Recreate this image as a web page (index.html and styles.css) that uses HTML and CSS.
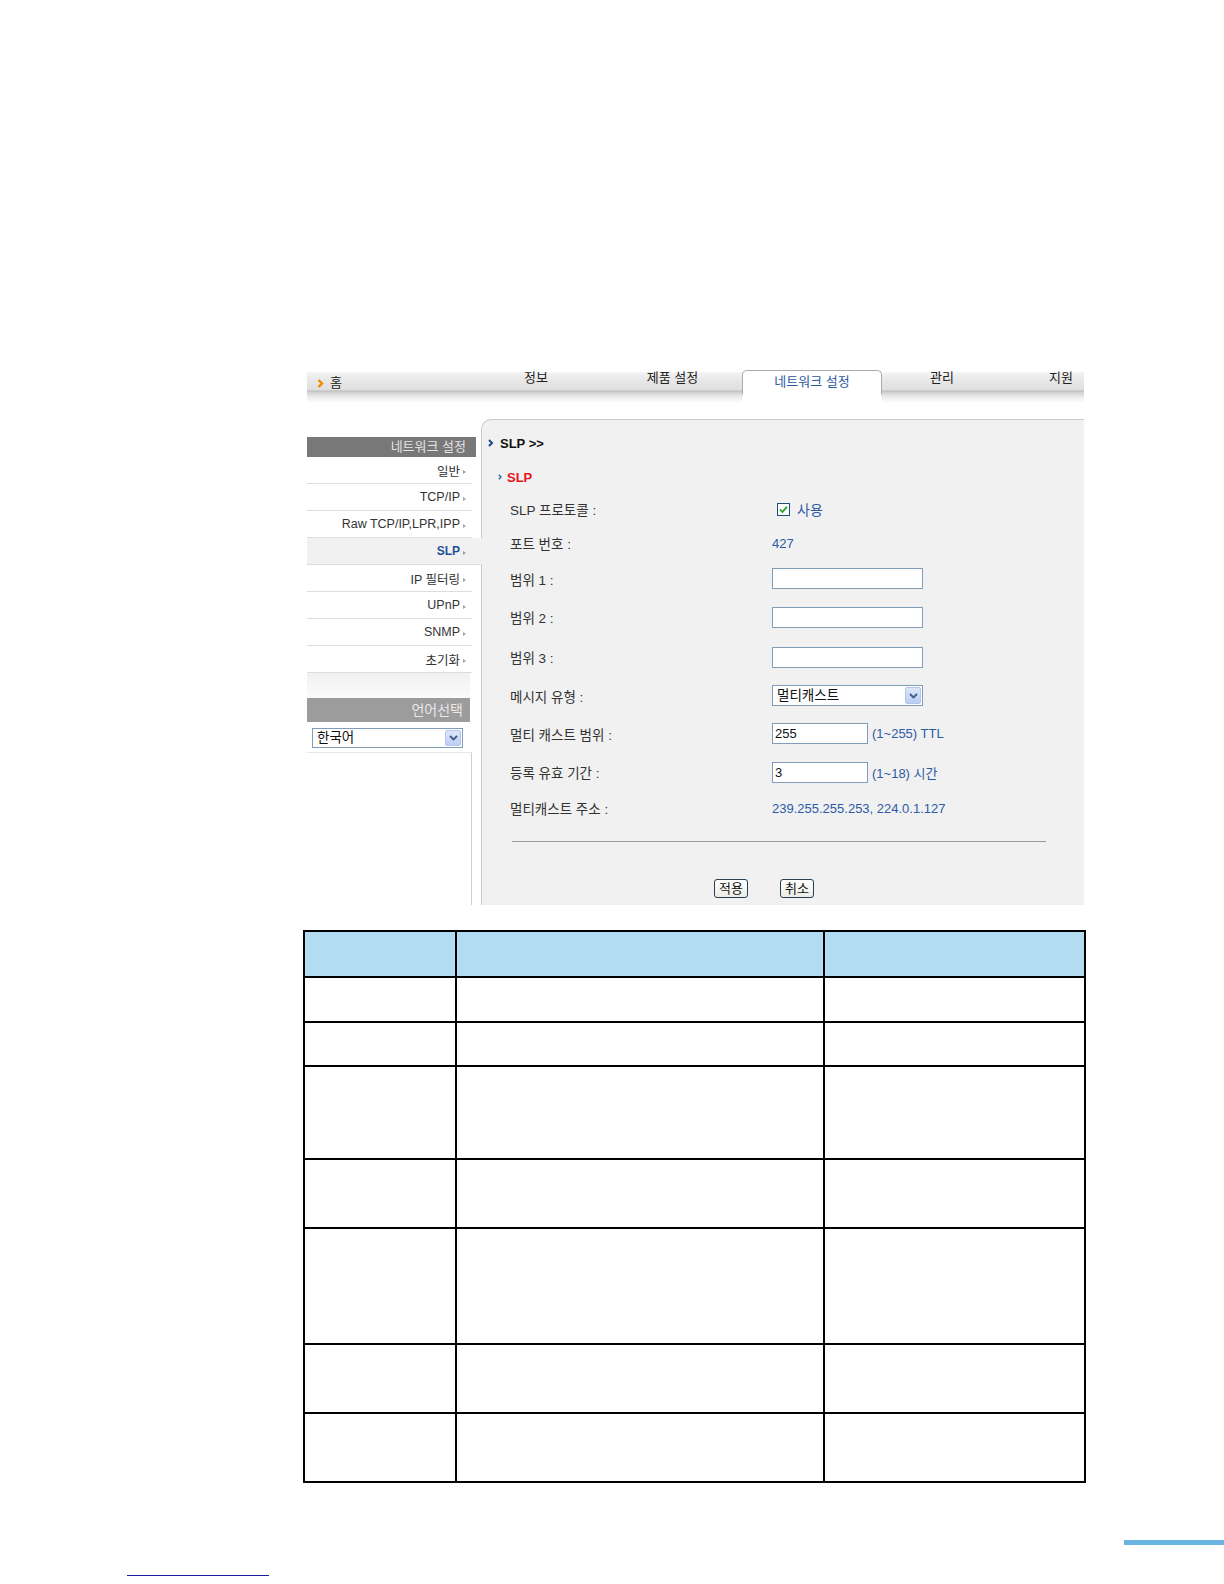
FILE: index.html
```html
<!DOCTYPE html>
<html lang="ko">
<head>
<meta charset="utf-8">
<title>SLP</title>
<link rel="stylesheet" href="styles.css">
</head>
<body>
<div class="page">
  <nav class="nav">
    <div class="nav-item nav-home">
      <svg class="home-arrow" width="7" height="9" viewBox="0 0 7 9"><polyline points="1.5,1 5,4.5 1.5,8" fill="none" stroke="#f08a00" stroke-width="2.4"/></svg>
      <span>홈</span>
    </div>
    <div class="nav-item nav-w1">정보</div>
    <div class="nav-item nav-w2">제품 설정</div>
    <div class="nav-item nav-tab">네트워크 설정</div>
    <div class="nav-item nav-w3">관리</div>
    <div class="nav-item nav-w4">지원</div>
  </nav>

  <div class="main">
    <aside class="side">
      <div class="side-head">네트워크 설정</div>
      <ul class="side-menu">
        <li class="side-item">일반<span class="tri"></span></li>
        <li class="side-item">TCP/IP<span class="tri"></span></li>
        <li class="side-item">Raw TCP/IP,LPR,IPP<span class="tri"></span></li>
        <li class="side-item active">SLP<span class="tri"></span></li>
        <li class="side-item">IP 필터링<span class="tri"></span></li>
        <li class="side-item">UPnP<span class="tri"></span></li>
        <li class="side-item">SNMP<span class="tri"></span></li>
        <li class="side-item">초기화<span class="tri"></span></li>
      </ul>
      <div class="side-spacer"></div>
      <div class="side-head side-head-lang">언어선택</div>
      <div class="lang-wrap">
        <div class="select select-lang">
          <span class="select-text">한국어</span>
          <span class="select-btn"><svg width="9" height="6" viewBox="0 0 9 6"><polyline points="1,1 4.5,4.5 8,1" fill="none" stroke="#3d5a8c" stroke-width="1.8"/></svg></span>
        </div>
      </div>
      <div class="side-fill"></div>
    </aside>

    <section class="panel">
      <div class="panel-title">
        <svg width="6" height="8" viewBox="0 0 6 8"><polyline points="1,1 4,4 1,7" fill="none" stroke="#1c4a8a" stroke-width="2"/></svg>
        <span>SLP &gt;&gt;</span>
      </div>
      <div class="panel-sub">
        <svg width="4" height="6" viewBox="0 0 4 6"><polyline points="0.8,0.8 3,3 0.8,5.2" fill="none" stroke="#3a62a0" stroke-width="1.4"/></svg>
        <span>SLP</span>
      </div>

      <div class="form">
        <div class="row h34">
          <div class="label">SLP 프로토콜 :</div>
          <div class="value check-val">
            <span class="checkbox"><svg width="13" height="13" viewBox="0 0 13 13"><rect x="0.5" y="0.5" width="12" height="12" fill="#fbfbfb" stroke="#1f4e7a"/><polyline points="3,6.5 5.4,9 10,3.8" fill="none" stroke="#22a322" stroke-width="1.8"/></svg></span>
            <span class="blue ko">사용</span>
          </div>
        </div>
        <div class="row h34">
          <div class="label">포트 번호 :</div>
          <div class="value blue">427</div>
        </div>
        <div class="row h37">
          <div class="label">범위 1 :</div>
          <div class="value"><input class="text-in wide" type="text" value=""></div>
        </div>
        <div class="row h40">
          <div class="label">범위 2 :</div>
          <div class="value"><input class="text-in wide" type="text" value=""></div>
        </div>
        <div class="row h40">
          <div class="label">범위 3 :</div>
          <div class="value"><input class="text-in wide" type="text" value=""></div>
        </div>
        <div class="row h37">
          <div class="label">메시지 유형 :</div>
          <div class="value">
            <div class="select select-msg">
              <span class="select-text">멀티캐스트</span>
              <span class="select-btn"><svg width="9" height="6" viewBox="0 0 9 6"><polyline points="1,1 4.5,4.5 8,1" fill="none" stroke="#3d5a8c" stroke-width="1.8"/></svg></span>
            </div>
          </div>
        </div>
        <div class="row h39">
          <div class="label">멀티 캐스트 범위 :</div>
          <div class="value inline-val"><input class="text-in narrow" type="text" value="255"><span class="blue">(1~255) TTL</span></div>
        </div>
        <div class="row h38">
          <div class="label">등록 유효 기간 :</div>
          <div class="value inline-val"><input class="text-in narrow" type="text" value="3"><span class="blue">(1~18) 시간</span></div>
        </div>
        <div class="row h34">
          <div class="label">멀티캐스트 주소 :</div>
          <div class="value blue">239.255.255.253, 224.0.1.127</div>
        </div>
      </div>

      <div class="hr"></div>

      <div class="buttons">
        <button class="btn" type="button">적용</button>
        <button class="btn" type="button">취소</button>
      </div>
    </section>
  </div>

  <table class="spec">
    <colgroup>
      <col class="c1">
      <col class="c2">
      <col class="c3">
    </colgroup>
    <tr class="r-head"><th></th><th></th><th></th></tr>
    <tr class="r45"><td></td><td></td><td></td></tr>
    <tr class="r44"><td></td><td></td><td></td></tr>
    <tr class="r93"><td></td><td></td><td></td></tr>
    <tr class="r69"><td></td><td></td><td></td></tr>
    <tr class="r116"><td></td><td></td><td></td></tr>
    <tr class="r69"><td></td><td></td><td></td></tr>
    <tr class="r69"><td></td><td></td><td></td></tr>
  </table>

  <div class="foot-bar"></div>
  <div class="foot-line"></div>
</div>
</body>
</html>
```

FILE: styles.css
```css
* { box-sizing: border-box; }

html, body {
  margin: 0;
  padding: 0;
  background: #ffffff;
}

body {
  width: 1224px;
  font-family: "Liberation Sans", Arial, "Noto Sans CJK KR", sans-serif;
  color: #222222;
}

.page {
  padding-top: 370px;
}

/* ---------- top navigation ---------- */
.nav {
  margin-left: 307px;
  width: 777px;
  height: 33px;
  display: flex;
  font-size: 13px;
  line-height: 14px;
  color: #222222;
  background: linear-gradient(to bottom,
    #ffffff 0, #ffffff 2px,
    #f5f5f5 2px, #e9e9e9 9px, #dfdfdf 20px,
    #bcbcbc 21px, #cfcfcf 22px,
    #ececec 27px, #ffffff 33px);
}

.nav-item {
  padding-top: 1px;
  text-align: center;
  white-space: nowrap;
}

.nav-home {
  width: 162px;
  display: flex;
  align-items: flex-start;
  gap: 6px;
  padding-left: 10px;
  padding-top: 6px;
  text-align: left;
}

.home-arrow {
  margin-top: 3px;
}

.nav-w1 { width: 134px; }
.nav-w2 { width: 139px; }

.nav-tab {
  position: relative;
  width: 140px;
  padding-top: 4px;
  color: #2a5ba0;
  background: #ffffff;
  border: 1px solid #ababab;
  border-bottom: 0;
  border-radius: 5px 5px 0 0;
}

.nav-tab::after {
  content: "";
  position: absolute;
  left: -1px;
  right: -1px;
  bottom: 0;
  height: 9px;
  background: linear-gradient(to bottom, rgba(255,255,255,0.6), #ffffff 4px);
}

.nav-w3 { width: 120px; }

.nav-w4 {
  width: 82px;
  text-align: right;
  padding-right: 11px;
}

/* ---------- main area ---------- */
.main {
  display: flex;
  margin-top: 16px;
  margin-left: 307px;
}

.side {
  width: 174px;
  padding-top: 18px;
  display: flex;
  flex-direction: column;
}

.side-head {
  height: 20px;
  margin-right: 5px;
  padding-right: 10px;
  background: #787878;
  color: #e4e4e4;
  text-align: right;
  font-size: 13px;
  line-height: 20px;
}

.side-menu {
  list-style: none;
  margin: 0;
  padding: 0;
}

.side-item {
  height: 27px;
  margin-right: 9px;
  padding-right: 6px;
  border-bottom: 1px solid #dddddd;
  display: flex;
  justify-content: flex-end;
  align-items: center;
  gap: 3px;
  font-size: 12.5px;
  color: #333333;
}

.side-item.active {
  position: relative;
  z-index: 1;
  margin-right: -1px;
  padding-right: 16px;
  background: #f1f1f1;
  color: #1f4f9a;
  font-weight: bold;
  font-size: 12px;
}

.tri {
  width: 0;
  height: 0;
  margin-top: 3px;
  border-left: 3px solid #a0a0a0;
  border-top: 2.5px solid transparent;
  border-bottom: 2.5px solid transparent;
}

.side-spacer {
  height: 25px;
  margin-right: 11px;
  background: linear-gradient(to bottom, #f1f1f1, #fbfbfb);
}

.side-head-lang {
  height: 24px;
  line-height: 24px;
  margin-right: 11px;
  padding-right: 7px;
  background: #9c9c9c;
  color: #e8e8e8;
  font-size: 14px;
}

.lang-wrap {
  padding: 6px 0 0 5px;
}

.side-fill {
  flex: 1;
  margin-top: 4px;
  margin-right: 9px;
  border-top: 1px solid #e8e8e8;
  border-right: 1px solid #cfcfcf;
}

/* ---------- select look-alike ---------- */
.select {
  width: 151px;
  display: flex;
  align-items: center;
  justify-content: space-between;
  background: #ffffff;
  border: 1px solid #7f9db9;
  padding: 1px 1px 1px 4px;
  font-size: 13.5px;
  color: #111111;
}

.select-lang { height: 20px; }
.select-msg { height: 21px; }

.select-text {
  line-height: 16px;
}

.select-btn {
  width: 16px;
  height: 100%;
  display: flex;
  align-items: center;
  justify-content: center;
  background: linear-gradient(to bottom, #dde7fb, #bccdf3);
  border: 1px solid #b4c6ee;
  border-radius: 2px;
}

/* ---------- panel ---------- */
.panel {
  width: 603px;
  padding-bottom: 7px;
  background: #f1f1f1;
  border-left: 1px solid #c9c9c9;
  border-top: 1px solid #c9c9c9;
  border-top-left-radius: 10px;
  font-size: 13px;
}

.panel-title {
  margin: 14px 0 0 6px;
  height: 18px;
  display: flex;
  align-items: center;
  gap: 6px;
  font-weight: bold;
  color: #111111;
}

.panel-sub {
  margin: 16px 0 0 16px;
  height: 18px;
  display: flex;
  align-items: center;
  gap: 5px;
  font-weight: bold;
  color: #e8141c;
}

.form {
  margin-top: 6px;
}

.row {
  display: flex;
  align-items: center;
  padding-left: 28px;
}

.h34 { height: 34px; }
.h37 { height: 37px; }
.h38 { height: 38px; }
.h39 { height: 39px; }
.h40 { height: 40px; }

.label {
  width: 262px;
  color: #333333;
  white-space: nowrap;
  font-size: 13.5px;
}

.value {
  white-space: nowrap;
}

.blue {
  color: #2c5ba6;
}

.ko {
  font-size: 14px;
}

.check-val {
  display: flex;
  align-items: center;
  gap: 7px;
  padding-left: 5px;
}

.checkbox {
  display: flex;
}

.inline-val {
  display: flex;
  align-items: center;
  gap: 4px;
}

.text-in {
  display: block;
  height: 21px;
  margin: 0;
  padding: 0 2px;
  border: 1px solid #7f9db9;
  background: #ffffff;
  font-family: "Liberation Sans", Arial, "Noto Sans CJK KR", sans-serif;
  font-size: 13px;
  color: #111111;
  outline: none;
}

.text-in.wide { width: 151px; }
.text-in.narrow { width: 96px; }

.hr {
  margin: 16px 0 0 30px;
  width: 534px;
  height: 1px;
  background: #9a9a9a;
}

.buttons {
  margin: 37px 0 0 232px;
  display: flex;
  gap: 32px;
}

.btn {
  width: 34px;
  height: 19px;
  margin: 0;
  padding: 0;
  border: 1px solid #2b3f55;
  border-radius: 3px;
  background: linear-gradient(to bottom, #ffffff, #ecece6);
  font-family: "Liberation Sans", Arial, "Noto Sans CJK KR", sans-serif;
  font-size: 13px;
  line-height: 16px;
  color: #111111;
}

/* ---------- spec table ---------- */
.spec {
  margin: 25px 0 0 303px;
  width: 781px;
  table-layout: fixed;
  border-collapse: collapse;
}

.spec .c1 { width: 152px; }
.spec .c2 { width: 368px; }
.spec .c3 { width: 261px; }

.spec th,
.spec td {
  padding: 0;
  border: 2px solid #000000;
}

.spec th {
  background: #b3dbf1;
}

.r-head { height: 46px; }
.r45 { height: 45px; }
.r44 { height: 44px; }
.r93 { height: 93px; }
.r69 { height: 69px; }
.r116 { height: 116px; }

/* ---------- footer decorations ---------- */
.foot-bar {
  margin: 57px 0 0 1124px;
  width: 100px;
  height: 5px;
  background: #68b3df;
}

.foot-line {
  margin: 30px 0 0 127px;
  width: 142px;
  height: 1px;
  background: #1c1ca0;
}
```
